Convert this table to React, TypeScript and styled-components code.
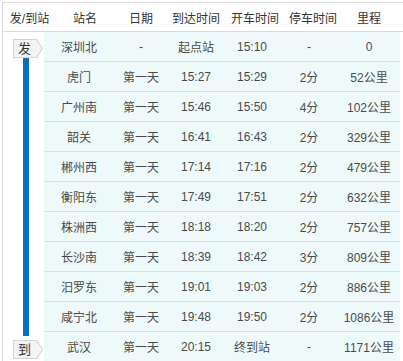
import styled, { createGlobalStyle } from 'styled-components'

const GlobalStyle = createGlobalStyle`
  html, body {
    margin: 0;
    padding: 0;
    background: #fff;
    overflow: hidden;
  }
  body {
    font-family: "Liberation Sans", "Noto Sans CJK SC", sans-serif;
    font-size: 12px;
  }
`

type Stop = {
  name: string
  day: string
  arrive: string
  depart: string
  stay: string
  distance: string
}

const stops: Stop[] = [
  { name: '深圳北', day: '-', arrive: '起点站', depart: '15:10', stay: '-', distance: '0' },
  { name: '虎门', day: '第一天', arrive: '15:27', depart: '15:29', stay: '2分', distance: '52公里' },
  { name: '广州南', day: '第一天', arrive: '15:46', depart: '15:50', stay: '4分', distance: '102公里' },
  { name: '韶关', day: '第一天', arrive: '16:41', depart: '16:43', stay: '2分', distance: '329公里' },
  { name: '郴州西', day: '第一天', arrive: '17:14', depart: '17:16', stay: '2分', distance: '479公里' },
  { name: '衡阳东', day: '第一天', arrive: '17:49', depart: '17:51', stay: '2分', distance: '632公里' },
  { name: '株洲西', day: '第一天', arrive: '18:18', depart: '18:20', stay: '2分', distance: '757公里' },
  { name: '长沙南', day: '第一天', arrive: '18:39', depart: '18:42', stay: '3分', distance: '809公里' },
  { name: '汨罗东', day: '第一天', arrive: '19:01', depart: '19:03', stay: '2分', distance: '886公里' },
  { name: '咸宁北', day: '第一天', arrive: '19:48', depart: '19:50', stay: '2分', distance: '1086公里' },
  { name: '武汉', day: '第一天', arrive: '20:15', depart: '终到站', stay: '-', distance: '1171公里' },
]

const headers = ['发/到站', '站名', '日期', '到达时间', '开车时间', '停车时间', '里程']

const Wrapper = styled.div`
  margin: 2px 0 0 2px;
  border-top: 1px solid #dcdcdc;
  border-left: 1px solid #dcdcdc;
  height: 400px;
`

const HeaderRow = styled.div`
  display: grid;
  grid-template-columns: 53px 58px 54px 56px 62px 54px 58px;
  height: 28px;
  border-bottom: 1px solid #d9d9d9;
  color: #333;
`

const HeaderCell = styled.div`
  display: flex;
  align-items: center;
  justify-content: center;
  white-space: nowrap;
`

const Body = styled.div`
  display: flex;
`

const Rail = styled.div`
  width: 41px;
  display: flex;
  flex-direction: column;
  align-items: flex-start;
  padding: 7px 0 3px 10px;
  box-sizing: border-box;
`

const BadgeOutline = styled.div`
  width: 30px;
  height: 19px;
  padding: 1px;
  box-sizing: border-box;
  background: #d4d4d4;
  clip-path: polygon(0 0, 80% 0, 100% 50%, 80% 100%, 0 100%);
  flex-shrink: 0;
`

const BadgeFace = styled.div`
  height: 100%;
  background: #f4f4f4;
  clip-path: polygon(0 0, 79% 0, 100% 50%, 79% 100%, 0 100%);
  display: flex;
  align-items: center;
  padding-left: 4px;
  color: #333;
  font-size: 13px;
  line-height: 1;
`

const Line = styled.div`
  flex: 1;
  width: 6px;
  margin: 0 0 4px 10px;
  background: #0b6fc4;
`

const Rows = styled.div`
  width: 356px;
  background: #eefafa;
`

const Row = styled.div`
  display: grid;
  grid-template-columns: 70px 54px 56px 56px 58px 62px;
  height: 29px;
  border-bottom: 1px solid #d6e3e3;
  color: #4a4a4a;
`

const Cell = styled.div`
  display: flex;
  align-items: center;
  justify-content: center;
  white-space: nowrap;
`

const Badge = ({ label }: { label: string }) => (
  <BadgeOutline>
    <BadgeFace>{label}</BadgeFace>
  </BadgeOutline>
)

export default function App() {
  return (
    <>
      <GlobalStyle />
      <Wrapper>
        <HeaderRow>
          {headers.map(h => (
            <HeaderCell key={h}>{h}</HeaderCell>
          ))}
        </HeaderRow>
        <Body>
          <Rail>
            <Badge label="发" />
            <Line />
            <Badge label="到" />
          </Rail>
          <Rows>
            {stops.map(s => (
              <Row key={s.name}>
                <Cell>{s.name}</Cell>
                <Cell>{s.day}</Cell>
                <Cell>{s.arrive}</Cell>
                <Cell>{s.depart}</Cell>
                <Cell>{s.stay}</Cell>
                <Cell>{s.distance}</Cell>
              </Row>
            ))}
          </Rows>
        </Body>
      </Wrapper>
    </>
  )
}
